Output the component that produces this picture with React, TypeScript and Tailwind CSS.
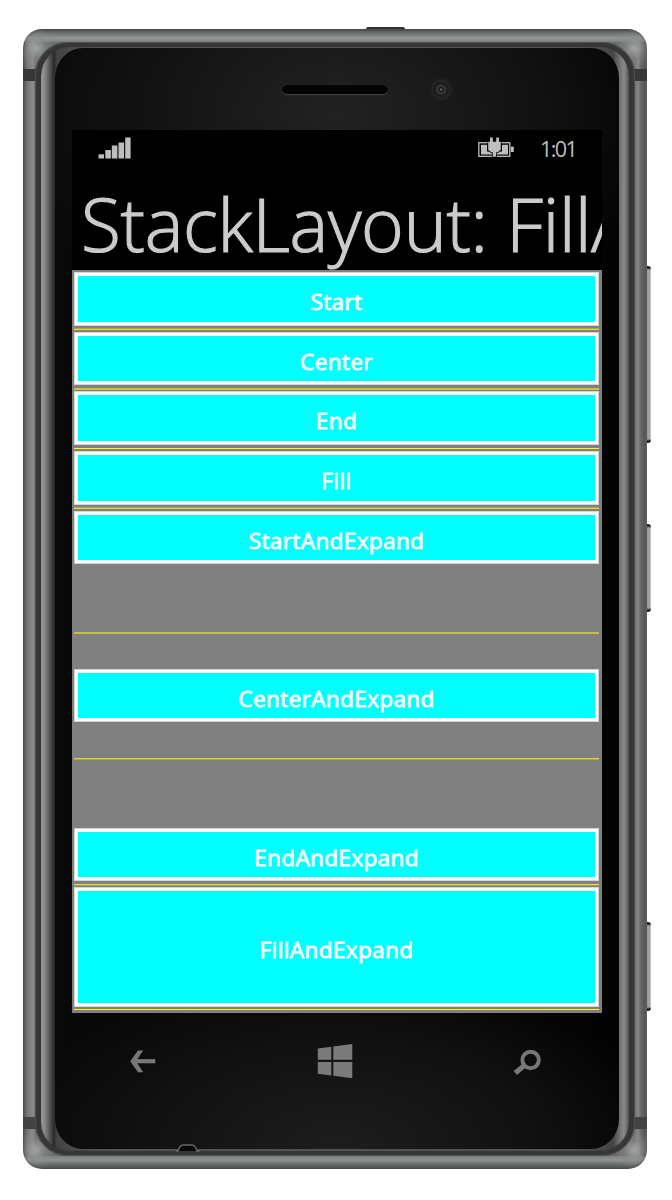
import React from 'react';

type Row = {
  label: string;
  button: string;
  line: string;
};

const rows: Row[] = [
  { label: 'Start', button: 'mt-[2px] h-[54px]', line: 'mt-[2px] h-[2px] bg-[linear-gradient(#a5a55b_50%,#e3e31c_50%)]' },
  { label: 'Center', button: 'mt-[2px] h-[53px]', line: 'mt-[3px] h-[2px] bg-[#c6c63a]' },
  { label: 'End', button: 'mt-[1px] h-[54px]', line: 'mt-[3px] h-px bg-[#ffff00]' },
  { label: 'Fill', button: 'mt-[2px] h-[54px]', line: 'mt-[2px] h-[2px] bg-[linear-gradient(#a8a858_50%,#dcdc22_50%)]' },
  { label: 'StartAndExpand', button: 'mt-[2px] h-[53px]', line: 'mt-[68px] h-[2px] bg-[#c2c23e]' },
  { label: 'CenterAndExpand', button: 'mt-[35px] h-[53px]', line: 'mt-[36px] h-[2px] bg-[linear-gradient(#d6d628_50%,#a8a858_50%)]' },
  { label: 'EndAndExpand', button: 'mt-[68px] h-[53px]', line: 'mt-[3px] h-[2px] bg-[linear-gradient(#e6e61a_50%,#9a9a66_50%)]' },
  { label: 'FillAndExpand', button: 'mt-[1px] h-[120px]', line: 'mt-[2px] h-px bg-[#ffff00]' },
];

function SideKeys() {
  return (
    <div className="-ml-px flex flex-col pt-[237px]">
      {['mb-[81px] h-[177px]', 'mb-[310px] h-[88px]', 'h-[89px]'].map((size) => (
        <div
          key={size}
          className={`w-[5px] rounded-r-[3px] bg-[linear-gradient(#222_0,#222_2px,transparent_4px,transparent_calc(100%-4px),#222_calc(100%-2px)),linear-gradient(90deg,#777,#aaa_45%,#999_70%,#ddd)] ${size}`}
        />
      ))}
    </div>
  );
}

function Earpiece() {
  return (
    <div className="flex h-[81px] items-center pl-[227px]">
      <div className="h-[10px] w-[106px] rounded-full border-b border-[#444] bg-[#020202] shadow-[0_0_1px_#555]" />
      <div className="ml-[42px] size-[23px] rounded-full bg-[radial-gradient(circle_at_48%_50%,#777_0,#171717_2px,#3c3c40_4px,#1a1a1a_6px,#252525_9px,#1c1c1c_11px)]" />
    </div>
  );
}

function StatusBar() {
  return (
    <div className="flex h-[40px] items-start px-[26px] pt-[7px]">
      <svg width="33" height="22" fill="#bebebe">
        <rect x="0.5" y="17.3" width="5.5" height="4.2" />
        <rect x="7.3" y="13" width="5.6" height="8.5" />
        <rect x="13.8" y="8.5" width="5.6" height="13" />
        <rect x="20.5" y="5.5" width="5.6" height="16" />
        <rect x="27.2" y="0.5" width="5.4" height="21" />
      </svg>
      <svg className="ml-auto" width="37" height="22">
        <rect x="0.8" y="5.7" width="31" height="13.6" fill="none" stroke="#bebebe" strokeWidth="1.3" />
        <path d="M3 7.8H9V14.5H14V17.5H3ZM30 7.8H24V14.5H18.5V17.5H30Z" fill="#bebebe" />
        <rect x="32.8" y="9.6" width="3" height="5.4" fill="#bebebe" />
        <path d="M12 .5h2.8v4.3h3.4V.5H21v4.3h1.8v8l-3 2.5h-1.6v4.5h-3.4v-4.5h-1.6l-3-2.5v-8H12z" fill="#bebebe" stroke="#000" strokeWidth="1.4" paintOrder="stroke" />
      </svg>
      <span className="-mt-[2px] ml-[25px] w-[36px] whitespace-nowrap font-['Open_Sans','Noto_Sans',sans-serif] text-[21.5px] leading-[27px] tracking-[-1.6px] text-[#bebebe]">
        1:01
      </span>
    </div>
  );
}

function Screen() {
  return (
    <div className="ml-[17px] flex h-[883px] w-[530px] flex-col overflow-hidden bg-black">
      <StatusBar />
      <div className="h-[100px] overflow-hidden whitespace-nowrap pl-[9px] font-['Open_Sans','Noto_Sans',sans-serif] text-[73px] font-light leading-[107px] tracking-[-0.3px] text-[#cbcbcb] [-webkit-text-stroke:1.2px_#cbcbcb]">
        StackLayout: FillAndExpand
      </div>
      <div className="flex grow flex-col bg-[#808080] pl-[2px] pr-[3px]">
        {rows.map((row) => (
          <React.Fragment key={row.label}>
            <div
              className={`flex shrink-0 items-center justify-center border-[4px] border-white bg-[#00ffff] pt-[6px] font-['Open_Sans','Noto_Sans',sans-serif] text-[22.5px] font-normal leading-[28px] tracking-[0.4px] text-white outline-1 -outline-offset-1 outline-[#d4d4d4] [-webkit-text-stroke:0.8px_white] ${row.button}`}
            >
              {row.label}
            </div>
            <div className={`shrink-0 ${row.line}`} />
          </React.Fragment>
        ))}
      </div>
    </div>
  );
}

function NavKeys() {
  return (
    <div className="flex items-center justify-between pl-[75px] pr-[78px] pt-[31px]">
      <svg width="26" height="23" fill="none" stroke="#777">
        <path d="M3 11.2H25.3" strokeWidth="4.2" />
        <path d="M0.2 11.2L8 .5H13.2L6 11.2L13.2 22.3H8Z" fill="#777" stroke="none" />
      </svg>
      <svg width="36" height="35" fill="#7b7b7b">
        <path d="M.8 4.5L14.3 2.8V15.8H.8ZM16.3 2.4L35.3 0V15.8H16.3ZM.8 18H14.3V31.4L.8 29.8ZM16.3 18H35.3V34.3L16.3 31.8Z" />
      </svg>
      <svg width="28" height="26" fill="none" stroke="#777">
        <circle cx="17.6" cy="11" r="8.2" strokeWidth="4" />
        <path d="M11.6 16.3L2.3 24" strokeWidth="5" />
      </svg>
    </div>
  );
}

const metal = [
  'bg-[radial-gradient(circle_at_13px_19px,#a1a4a3_0,#8a8d8c80_10px,transparent_20px),radial-gradient(circle_at_611px_19px,#a1a4a3_0,#8a8d8c80_10px,transparent_20px),radial-gradient(circle_at_13px_1121px,#a1a4a3_0,#8a8d8c80_10px,transparent_20px),radial-gradient(circle_at_611px_1121px,#a1a4a3_0,#8a8d8c80_10px,transparent_20px),linear-gradient(transparent_40px,#363838_40px,#363838_52px,transparent_52px,transparent_1088px,#424444_1088px,#424444_1100px,transparent_1100px),linear-gradient(#4b4e4d_0,#646766_3px,#929594_9px,#7d807f_13px,transparent_13px,transparent_1127px,#7b7e7d_1127px,#929594_1131px,#626564_1136px,#515453_1140px),linear-gradient(90deg,#555_0,#626564_2px,#7d807f_6px,#898c8b_10px,#686b6a_13px,#686b6a_611px,#858887_615px,#646766_618px,#555857_622px,#777_624px)]',
  'shadow-[inset_0_0_3px_#3c3e3d]',
].join(' ');

export default function App() {
  return (
    <div className="h-[1200px] w-[672px] overflow-hidden bg-white pl-[23px] pt-[27px]">
      <div className="ml-[343px] h-[2px] w-[39px] rounded-t-[3px] bg-[#333]" />
      <div className="flex">
        <div className={`relative h-[1140px] w-[624px] shrink-0 rounded-[19px] pl-[12px] pt-[13px] ${metal}`}>
          <div className="h-[1114px] w-[600px] rounded-[33px] bg-[#353736] pl-[6px] pt-[5px] shadow-[inset_0_0_1px_1px_#505251]">
            <div className="h-[1105px] w-[588px] rounded-[29px] bg-[linear-gradient(90deg,#a0a0a0_0,#858585_4px,#5c5c5c_8px,#2a2a2a_13px,#444_16px,#555_60px,#555_530px,#444_572px,#606060_576px,#8a8a8a_583px,#555_588px)] pb-[3px] pl-[14px] pr-[10px] pt-px shadow-[inset_0_-1px_1px_#333]">
              <div className="h-[1101px] w-[564px] rounded-[28px/30px] bg-[radial-gradient(ellipse_330px_230px_at_50%_6%,#222,#121212_60%,transparent),radial-gradient(ellipse_330px_180px_at_50%_100%,#1d1d1d,#111_60%,transparent),linear-gradient(90deg,#090909,#030303)] pt-px">
                <Earpiece />
                <Screen />
                <NavKeys />
              </div>
            </div>
          </div>
          <svg className="absolute bottom-[15px] left-[153px]" width="24" height="10">
            <path d="M2 7Q4 1 7 1H16Q19 1 21 7Z" fill="#080808" />
            <path d="M0 7H2Q4 1 7 1H16Q19 1 21 7H24" fill="none" stroke="#666" strokeWidth="1.4" />
          </svg>
        </div>
        <SideKeys />
      </div>
    </div>
  );
}
